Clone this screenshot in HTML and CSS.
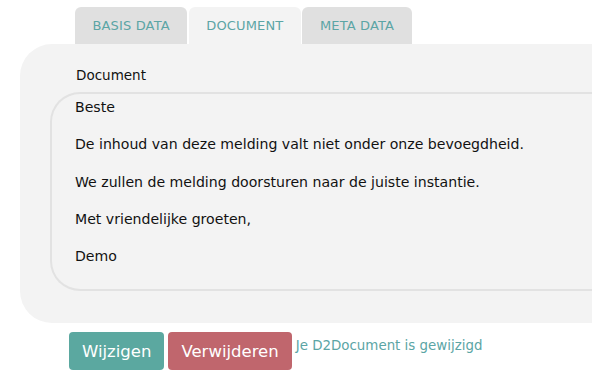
FILE: index.html
```html
<!DOCTYPE html>
<html lang="nl">
<head>
<meta charset="utf-8">
<title>Document</title>
<link rel="stylesheet" href="styles.css">
</head>
<body>
<div class="page">
  <nav class="tabs">
    <div class="tab">BASIS DATA</div>
    <div class="tab active">DOCUMENT</div>
    <div class="tab">META DATA</div>
  </nav>
  <section class="panel">
    <div class="label">Document</div>
    <div class="editor">
      <p>Beste</p>
      <p>De inhoud van deze melding valt niet onder onze bevoegdheid.</p>
      <p>We zullen de melding doorsturen naar de juiste instantie.</p>
      <p>Met vriendelijke groeten,</p>
      <p>Demo</p>
    </div>
  </section>
  <div class="actions">
    <button class="btn btn-edit">Wijzigen</button>
    <button class="btn btn-delete">Verwijderen</button>
    <span class="msg">Je D2Document is gewijzigd</span>
  </div>
</div>
</body>
</html>
```

FILE: styles.css
```css
html, body {
  margin: 0;
  padding: 0;
  background: #ffffff;
  overflow: hidden;
}
body {
  font-family: "DejaVu Sans", "Noto Sans", sans-serif;
  color: #111;
}
.page {
  width: 592px;
}
.tabs {
  display: flex;
  gap: 1.5px;
  margin-left: 75px;
  padding-top: 7px;
}
.tab {
  height: 37px;
  box-sizing: border-box;
  padding: 0 17.5px;
  display: flex;
  align-items: center;
  background: #e0e0e0;
  color: #5ba5a5;
  font-size: 13px;
  letter-spacing: 0.15px;
  border-radius: 6px 6px 0 0;
}
.tab.active {
  background: #f3f3f3;
}
.panel {
  margin-left: 20px;
  background: #f3f3f3;
  border-radius: 32px 0 0 32px;
  padding: 23px 0 32px 30px;
}
.label {
  font-size: 13.5px;
  line-height: 16px;
  margin-left: 26px;
  margin-bottom: 9px;
}
.editor {
  height: 199px;
  box-sizing: border-box;
  border: 2px solid #e2e2e2;
  border-right: none;
  border-radius: 30px 0 0 30px;
  padding: 4px 0 0 23px;
  font-size: 14.1px;
  line-height: 18.67px;
}
.editor p {
  margin: 0 0 18.67px 0;
}
.actions {
  display: flex;
  align-items: flex-start;
  margin: 9px 0 0 69px;
  gap: 4px;
}
.btn {
  font-family: inherit;
  border: none;
  border-radius: 4px;
  color: #fff;
  font-size: 16.5px;
  height: 38px;
  padding: 0 13px;
}
.btn-edit {
  background: #5ba8a0;
}
.btn-delete {
  background: #c0666d;
}
.msg {
  color: #5ba5a5;
  font-size: 13.4px;
  margin-top: 6px;
}
```
